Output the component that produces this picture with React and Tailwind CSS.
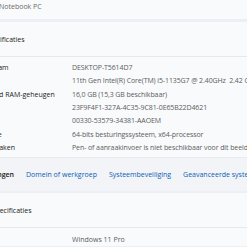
import React from "react";

const specs = [
  ["Apparaatnaam", "DESKTOP-T5614D7"],
  ["Processor", "11th Gen Intel(R) Core(TM) i5-1135G7 @ 2.40GHz  2.42 GHz"],
  ["Geïnstalleerd RAM-geheugen", "16,0 GB (15,3 GB beschikbaar)"],
  ["Apparaat-id", "23F9F4F1-327A-4C35-9C81-0E65B22D4621"],
  ["Product-id", "00330-53579-34381-AAOEM"],
  ["Systeemtype", "64-bits besturingssysteem, x64-processor"],
  ["Pen en aanraken", "Pen- of aanraakinvoer is niet beschikbaar voor dit beeldscherm"],
];

const links = ["Domein of werkgroep", "Systeembeveiliging", "Geavanceerde systeeminstellingen"];

export default function App() {
  return (
    <div
      className="w-[247px] h-[247px] overflow-hidden bg-[#eceff5] text-[7px] leading-none text-[#1b1b1b]"
      style={{ fontFamily: '"Open Sans", "Noto Sans", sans-serif' }}
    >
      <div className="ml-[-48px] w-[440px]">
        {/* top card */}
        <div className="h-[19px] bg-[#f9fafc] pl-[47px] pt-[3px] text-[#6b6b6b]">Notebook PC</div>

        {/* device specs */}
        <div className="mt-[3px] bg-[#f9fafc]">
          <div className="h-[35px] flex items-center pl-[3px] border-b border-[#e6e8ec]">Apparaatspecificaties</div>
          <div className="pt-[4px] pb-[3px]">
            {specs.map(([label, value]) => (
              <div key={label} className="h-[13.3px] flex items-center">
                <div className="w-[120px] pl-[8px] shrink-0 whitespace-nowrap">{label}</div>
                <div className="whitespace-pre text-[#5c5c5c] tracking-[-0.1px]">{value}</div>
              </div>
            ))}
          </div>
        </div>

        {/* related links */}
        <div className="h-[34px] bg-[#f3f4f8] flex items-center gap-[12px] border-t border-[#e9ebf0]">
          <div className="ml-[-26px] font-semibold whitespace-nowrap">Gerelateerde koppelingen</div>
          {links.map((l) => (
            <div key={l} className="text-[#0a5fb4] whitespace-nowrap">{l}</div>
          ))}
        </div>

        {/* windows specs */}
        <div className="mt-[2px] bg-[#f9fafc]">
          <div className="h-[35px] flex items-center pl-[8px] border-b border-[#e6e8ec]">Windows-specificaties</div>
          <div className="pt-[5px]">
            <div className="h-[13.3px] flex items-center">
              <div className="w-[120px] pl-[8px] shrink-0">Editie</div>
              <div className="text-[#5c5c5c]">Windows 11 Pro</div>
            </div>
          </div>
        </div>
      </div>
    </div>
  );
}
